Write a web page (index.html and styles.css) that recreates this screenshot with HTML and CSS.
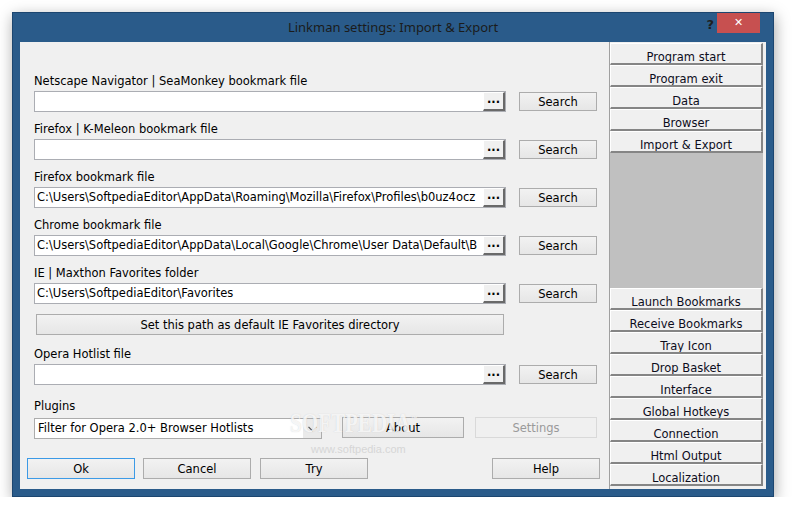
FILE: index.html
```html
<!DOCTYPE html>
<html lang="en">
<head>
  <meta charset="UTF-8">
  <title>Linkman settings: Import &amp; Export</title>
  <link rel="stylesheet" href="styles.css">
</head>
<body>
  <div class="window">
    <div class="titlebar">
      <span class="title">Linkman settings: Import &amp; Export</span>
      <span class="help-q">?</span>
      <span class="close">&#x2715;</span>
    </div>

    <div class="client">
      <div class="main">
        <div class="group">
          <div class="label">Netscape Navigator | SeaMonkey bookmark file</div>
          <div class="row">
            <div class="path"><span class="path-text"></span><span class="dots">...</span></div>
            <button class="btn search">Search</button>
          </div>
        </div>

        <div class="group">
          <div class="label">Firefox | K-Meleon bookmark file</div>
          <div class="row">
            <div class="path"><span class="path-text"></span><span class="dots">...</span></div>
            <button class="btn search">Search</button>
          </div>
        </div>

        <div class="group">
          <div class="label">Firefox bookmark file</div>
          <div class="row">
            <div class="path"><span class="path-text">C:\Users\SoftpediaEditor\AppData\Roaming\Mozilla\Firefox\Profiles\b0uz4ocz</span><span class="dots">...</span></div>
            <button class="btn search">Search</button>
          </div>
        </div>

        <div class="group">
          <div class="label">Chrome bookmark file</div>
          <div class="row">
            <div class="path"><span class="path-text">C:\Users\SoftpediaEditor\AppData\Local\Google\Chrome\User Data\Default\B</span><span class="dots">...</span></div>
            <button class="btn search">Search</button>
          </div>
        </div>

        <div class="group last">
          <div class="label">IE | Maxthon Favorites folder</div>
          <div class="row">
            <div class="path"><span class="path-text">C:\Users\SoftpediaEditor\Favorites</span><span class="dots">...</span></div>
            <button class="btn search">Search</button>
          </div>
        </div>

        <button class="btn default-ie">Set this path as default IE Favorites directory</button>

        <div class="group opera">
          <div class="label">Opera Hotlist file</div>
          <div class="row">
            <div class="path"><span class="path-text"></span><span class="dots">...</span></div>
            <button class="btn search">Search</button>
          </div>
        </div>

        <div class="group plugins">
          <div class="label">Plugins</div>
          <div class="row">
            <div class="combo">
              <span class="combo-text">Filter for Opera 2.0+ Browser Hotlists</span>
              <span class="combo-arrow">
                <svg width="9" height="6" viewBox="0 0 9 6"><path d="M0.5 0.8 L4.5 4.8 L8.5 0.8" fill="none" stroke="#555" stroke-width="1.2"/></svg>
              </span>
            </div>
            <button class="btn about">About</button>
            <button class="btn settings" disabled>Settings</button>
          </div>
        </div>

        <div class="bottom">
          <button class="btn wide focused">Ok</button>
          <button class="btn wide">Cancel</button>
          <button class="btn wide try">Try</button>
          <button class="btn wide help">Help</button>
        </div>

        <div class="watermark">SOFTPEDIA<sup>&trade;</sup></div>
        <div class="watermark-url">www.softpedia.com</div>
      </div>

      <div class="nav">
        <div class="nav-btn">Program start</div>
        <div class="nav-btn">Program exit</div>
        <div class="nav-btn">Data</div>
        <div class="nav-btn">Browser</div>
        <div class="nav-btn">Import &amp; Export</div>
        <div class="nav-space"></div>
        <div class="nav-btn">Launch Bookmarks</div>
        <div class="nav-btn">Receive Bookmarks</div>
        <div class="nav-btn">Tray Icon</div>
        <div class="nav-btn">Drop Basket</div>
        <div class="nav-btn">Interface</div>
        <div class="nav-btn">Global Hotkeys</div>
        <div class="nav-btn">Connection</div>
        <div class="nav-btn">Html Output</div>
        <div class="nav-btn">Localization</div>
      </div>
    </div>
  </div>
</body>
</html>
```

FILE: styles.css
```css
* { box-sizing: border-box; }
body {
  margin: 0;
  background: #fff;
  font-family: "DejaVu Sans", sans-serif;
  font-size: 11.5px;
  color: #000;
}
.window {
  margin: 12px 0 0 12px;
  width: 762px;
  height: 485px;
  background: #2a5b8a;
  border: 1px solid #1c4670;
  padding: 0 7px 7px 7px;
  box-shadow: 1px 4px 14px rgba(0, 0, 0, 0.35);
}
.titlebar {
  position: relative;
  height: 29px;
}
.title {
  display: block;
  text-align: center;
  line-height: 29px;
  font-family: "Noto Sans", sans-serif;
  font-size: 13px;
  color: #1b1b1b;
}
.help-q {
  position: absolute;
  right: 52px;
  top: 4px;
  font-weight: bold;
  font-size: 13px;
  color: #1e1e1e;
}
.close {
  position: absolute;
  right: 6px;
  top: 0;
  width: 43px;
  height: 20px;
  background: #c75050;
  color: #fff;
  font-size: 11px;
  font-weight: bold;
  text-align: center;
  line-height: 20px;
}
.client {
  display: flex;
  height: 447px;
  background: #f0f0f0;
}
.main {
  position: relative;
  width: 589px;
  padding: 31px 0 0 14px;
}
.group {
  margin-bottom: 9px;
}
.group.last {
  margin-bottom: 10px;
}
.group.opera {
  margin: 11px 0 13px 0;
}
.label {
  height: 16px;
  line-height: 16px;
  margin-bottom: 2px;
  white-space: nowrap;
}
.plugins .label {
  margin-bottom: 4px;
}
.row {
  display: flex;
  align-items: flex-start;
}
.path {
  display: flex;
  width: 472px;
  height: 21px;
  background: #fff;
  border: 1px solid #abadb3;
}
.path-text {
  flex: 1;
  overflow: hidden;
  white-space: nowrap;
  line-height: 19px;
  padding-left: 2px;
}
.dots {
  width: 22px;
  height: 19px;
  background: #f0f0f0;
  border-style: solid;
  border-width: 1px 2px 2px 1px;
  border-color: #fff #696969 #696969 #fff;
  font-weight: bold;
  text-align: center;
  line-height: 12px;
}
.btn {
  font-family: inherit;
  font-size: 11.5px;
  color: #000;
  background: linear-gradient(#f2f2f2, #e6e6e6);
  border: 1px solid #acacac;
  padding: 0;
  height: 21px;
}
.search {
  width: 78px;
  height: 19px;
  margin: 1px 0 0 13px;
}
.default-ie {
  display: block;
  width: 468px;
  margin-left: 2px;
}
.combo {
  display: flex;
  width: 288px;
  height: 21px;
  background: #fff;
  border: 1px solid #acacac;
}
.combo-text {
  flex: 1;
  line-height: 19px;
  padding-left: 3px;
  white-space: nowrap;
  overflow: hidden;
}
.combo-arrow {
  width: 18px;
  background: #eaeaea;
  display: flex;
  align-items: center;
  justify-content: center;
}
.about {
  width: 122px;
  margin: -1px 0 0 20px;
}
.settings {
  width: 122px;
  margin: -1px 0 0 11px;
  background: #f0f0f0;
  border-color: #d9d9d9;
  color: #9a9a9a;
}
.bottom {
  display: flex;
  gap: 8px;
  margin: 19px 0 0 -7px;
}
.wide {
  width: 108px;
}
.try {
  margin-left: 1px;
}
.help {
  margin-left: 116px;
}
.focused {
  border-color: #3c9ae6;
}
.watermark {
  position: absolute;
  left: 270px;
  top: 366px;
  font-family: "Liberation Serif", serif;
  font-weight: bold;
  font-size: 27px;
  color: rgba(255, 255, 255, 0.8);
  text-shadow: 0 0 1px rgba(170, 170, 170, 0.5);
  transform: scaleX(0.78);
  transform-origin: left top;
}
.watermark sup {
  font-size: 9px;
  font-family: "Liberation Sans", sans-serif;
}
.watermark-url {
  position: absolute;
  left: 291px;
  top: 401px;
  font-family: "Liberation Sans", sans-serif;
  font-size: 11px;
  color: #d6d6d6;
}
.nav {
  width: 157px;
  border-left: 1px solid #a0a0a0;
  padding-top: 1px;
}
.nav-btn {
  width: 153px;
  height: 22px;
  border-style: solid;
  border-width: 1px 2px 2px 1px;
  border-color: #fff #858585 #858585 #fff;
  background: #f0f0f0;
  text-align: center;
  padding-top: 5px;
  line-height: 16px;
  color: #0d0d1c;
  overflow: hidden;
}
.nav-space {
  height: 135px;
  width: 153px;
  background: #c0c0c0;
}
```
